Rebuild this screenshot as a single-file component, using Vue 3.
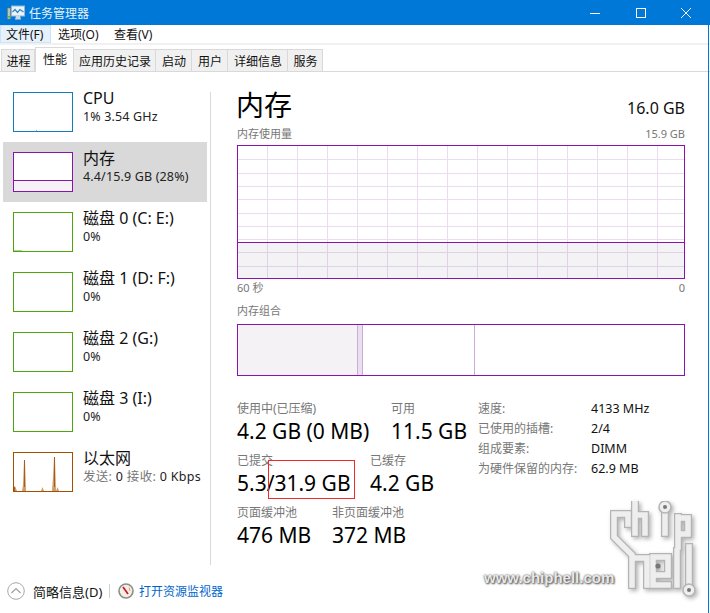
<script setup>
const menus = ['文件(F)', '选项(O)', '查看(V)']
const tabs = [
  { t: '进程', w: 34 }, { t: '性能', w: 39, active: true }, { t: '应用历史记录', w: 82 },
  { t: '启动', w: 36 }, { t: '用户', w: 36 }, { t: '详细信息', w: 60 }, { t: '服务', w: 35 },
]
const devices = [
  { name: 'CPU', sub: '1% 3.54 GHz', kind: 'cpu' },
  { name: '内存', sub: '4.4/15.9 GB (28%)', kind: 'mem', selected: true },
  { name: '磁盘 0 (C: E:)', sub: '0%', kind: 'disk first' },
  { name: '磁盘 1 (D: F:)', sub: '0%', kind: 'disk' },
  { name: '磁盘 2 (G:)', sub: '0%', kind: 'disk' },
  { name: '磁盘 3 (I:)', sub: '0%', kind: 'disk' },
]
const specs = [
  ['速度:', '4133 MHz'],
  ['已使用的插槽:', '2/4'],
  ['组成要素:', 'DIMM'],
  ['为硬件保留的内存:', '62.9 MB'],
]
</script>

<template>
  <div class="window">
    <header class="titlebar">
      <svg class="appicon" width="18" height="16" viewBox="0 0 18 16">
        <rect x="0.5" y="3" width="3" height="11" fill="#b9c4b8" stroke="#6f7f70" stroke-width="0.6" />
        <rect x="1" y="11" width="2" height="1.5" fill="#5cb04a" />
        <rect x="4.5" y="1" width="13" height="10" fill="#eaf3fa" stroke="#9ab4c8" />
        <path d="M5.5 7 L8 4.5 L10.5 7.5 L13 4.5 L16.5 7" fill="none" stroke="#2f86c9" stroke-width="1.2" />
        <path d="M8 14.5 H14 L13 11 H9 Z" fill="#cfd8de" />
      </svg>
      <span class="title">任务管理器</span>
      <div class="winbtns">
        <svg width="12" height="12" viewBox="0 0 12 12"><path d="M1 6.5 H11" stroke="#fff" stroke-width="1" /></svg>
        <svg width="12" height="12" viewBox="0 0 12 12"><rect x="1.5" y="1.5" width="9" height="9" fill="none" stroke="#fff" /></svg>
        <svg width="12" height="12" viewBox="0 0 12 12"><path d="M1 1 L11 11 M11 1 L1 11" stroke="#fff" stroke-width="1" /></svg>
      </div>
    </header>

    <nav class="menubar">
      <span v-for="(m, i) in menus" :key="m" class="menu" :class="{ hot: i === 0 }">{{ m }}</span>
    </nav>

    <div class="tabs">
      <span
        v-for="tab in tabs"
        :key="tab.t"
        class="tab"
        :class="{ active: tab.active }"
        :style="{ width: tab.w + 'px' }"
      >{{ tab.t }}</span>
    </div>

    <div class="body">
      <aside class="sidebar">
        <div v-for="d in devices" :key="d.name" class="device" :class="{ selected: d.selected }">
          <div class="thumb" :class="d.kind">
            <div v-if="d.kind === 'mem'" class="thumb-fill"></div>
          </div>
          <div class="device-text">
            <div class="device-name">{{ d.name }}</div>
            <div class="device-sub">{{ d.sub }}</div>
          </div>
        </div>
        <div class="device">
          <div class="thumb net">
            <svg width="58" height="38" viewBox="0 0 58 38" preserveAspectRatio="none">
              <path d="M0 38 V34 L1 33 L3 38 H8 L9 32 L10 7 L11 7 L12 38 H27 L28.5 34 L30 38 H38 L39 24 L40 4 L41 4 L42 38 L43.5 34 L45 38 Z" fill="#cf9c6e" />
              <path d="M10.5 7 V34 M40.5 4 V34 M0.5 34 V38" fill="none" stroke="#a95c14" stroke-width="1" />
            </svg>
          </div>
          <div class="device-text">
            <div class="device-name">以太网</div>
            <div class="device-sub net-sub"><span class="muted">发送:</span> 0 <span class="muted">接收:</span> 0 Kbps</div>
          </div>
        </div>
      </aside>
      <div class="divider"></div>

      <main class="main">
        <div class="head">
          <h1 class="h1">内存</h1>
          <span class="capacity">16.0 GB</span>
        </div>
        <div class="caption-row caption-top">
          <span>内存使用量</span><span>15.9 GB</span>
        </div>
        <div class="chart">
          <div class="chart-fill"></div>
        </div>
        <div class="caption-row axis">
          <span>60 秒</span><span>0</span>
        </div>
        <div class="caption-row compose-label"><span>内存组合</span></div>
        <div class="compose">
          <div class="seg seg-used"></div>
          <div class="seg seg-mod"></div>
          <div class="seg seg-standby"></div>
          <div class="seg seg-free"></div>
        </div>

        <div class="stats">
          <div class="stat-col">
            <div class="stat-row">
              <div class="stat stat-a"><label>使用中(已压缩)</label><b>4.2 GB (0 MB)</b></div>
              <div class="stat"><label>可用</label><b>11.5 GB</b></div>
            </div>
            <div class="stat-row">
              <div class="stat stat-b"><label>已提交</label><b>5.3/31.9 GB</b></div>
              <div class="stat"><label>已缓存</label><b>4.2 GB</b></div>
            </div>
            <div class="stat-row">
              <div class="stat stat-c"><label>页面缓冲池</label><b>476 MB</b></div>
              <div class="stat"><label>非页面缓冲池</label><b>372 MB</b></div>
            </div>
            <div class="redbox"></div>
          </div>
          <dl class="specs">
            <template v-for="s in specs" :key="s[0]">
              <dt>{{ s[0] }}</dt>
              <dd>{{ s[1] }}</dd>
            </template>
          </dl>
        </div>
      </main>
    </div>

    <footer class="footer">
      <svg width="18" height="18" viewBox="0 0 18 18">
        <circle cx="9" cy="9" r="8.3" fill="#fff" stroke="#a8a8a8" />
        <path d="M4.5 11 L9 6.5 L13.5 11" fill="none" stroke="#a0a0a0" stroke-width="1.2" />
      </svg>
      <span class="brief">简略信息(D)</span>
      <span class="sep"></span>
      <svg width="16" height="16" viewBox="0 0 16 16">
        <circle cx="8" cy="8" r="7" fill="#f3efe8" stroke="#8d8d85" stroke-width="1.6" />
        <path d="M5 4 L10 11" stroke="#c8202a" stroke-width="1.8" />
        <path d="M11 4.5 L12 8" stroke="#e0a070" stroke-width="1" />
      </svg>
      <span class="link">打开资源监视器</span>
    </footer>

    <div class="watermark">
      <svg class="logo" width="92" height="100" viewBox="0 0 92 100">
        <g fill="none" stroke-linejoin="miter" stroke-linecap="square">
          <g stroke="#b4b4b4" stroke-width="8">
            <path d="M21 23 V13 H7 V36 L25 54 V84 M25 57 H40 V84" />
            <path d="M28 1 V32 M28 14 H38 V32" />
            <path d="M58 10 V32" />
            <path d="M71 17 H81 V33 H71 M71 16 V46" />
            <path d="M46 56 H61 V74 H46 M46 56 V84 H61" />
            <path d="M70 50 V84" />
            <path d="M82 46 V86" />
          </g>
          <g stroke="#eeeeee" stroke-width="5.5">
            <path d="M21 23 V13 H7 V36 L25 54 V84 M25 57 H40 V84" />
            <path d="M28 1 V32 M28 14 H38 V32" />
            <path d="M58 10 V32" />
            <path d="M71 17 H81 V33 H71 M71 16 V46" />
            <path d="M46 56 H61 V74 H46 M46 56 V84 H61" />
            <path d="M70 50 V84" />
            <path d="M82 46 V86" />
          </g>
        </g>
        <circle cx="58" cy="6" r="6" fill="#eeeeee" stroke="#b4b4b4" stroke-width="1.5" />
        <circle cx="58" cy="6" r="2" fill="#777" />
        <circle cx="82" cy="89" r="6" fill="#eeeeee" stroke="#b4b4b4" stroke-width="1.5" />
        <circle cx="82" cy="89" r="2" fill="#777" />
        <circle cx="51" cy="65" r="2.6" fill="#777" />
      </svg>
      <span class="wm-text">www.chiphell.com</span>
    </div>
  </div>
</template>

<style>
html, body { margin: 0; background: #fff; overflow: hidden; }
</style>

<style scoped>
.window {
  position: relative;
  box-sizing: border-box;
  width: 710px;
  height: 613px;
  background: #fff;
  color: #000;
  overflow: hidden;
  display: flex;
  flex-direction: column;
  font-family: "Noto Sans", "Noto Sans CJK SC", sans-serif;
  font-size: 12px;
}
.window::after {
  content: "";
  position: absolute;
  right: 1px;
  top: 25px;
  bottom: 0;
  width: 1px;
  background: #0078d7;
}

.titlebar {
  height: 25px;
  flex: none;
  background: #0078d7;
  color: #fff;
  display: flex;
  align-items: center;
  padding-left: 7px;
}
.appicon { flex: none; }
.title { margin-left: 4px; font-size: 12px; color: #e6f1fa; }
.winbtns {
  margin-left: auto;
  width: 103px;
  padding-right: 18px;
  display: flex;
  justify-content: space-between;
  align-items: center;
}
.winbtns svg { display: block; }

.menubar {
  height: 20px;
  box-sizing: border-box;
  flex: none;
  display: flex;
  border-bottom: 2px solid #f1f1f1;
}
.menu {
  padding: 1px 0 0 7px;
  line-height: 17px;
  box-sizing: border-box;
  width: 56px;
  color: #111;
  white-space: nowrap;
}
.menu.hot {
  width: 51px;
  background: #e5f1fb;
  border: 1px solid #cde4f7;
  padding: 0 0 0 5px;
}

.tabs {
  flex: none;
  height: 26px;
  margin-top: 1px;
  display: flex;
  align-items: flex-end;
  padding-left: 1px;
  border-bottom: 1px solid #d9d9d9;
  box-sizing: border-box;
}
.tab {
  box-sizing: border-box;
  height: 22px;
  display: flex;
  align-items: center;
  justify-content: center;
  background: #f0f0f0;
  border: 1px solid #d9d9d9;
  border-bottom: 0;
  border-left-width: 0;
  padding-left: 1px;
  color: #111;
}
.tab:first-child { border-left-width: 1px; }
.tab.active {
  height: 25px;
  background: #fff;
  border-left-width: 1px;
  margin-bottom: -1px;
  padding-bottom: 3px;
}

.body {
  flex: 1;
  display: flex;
  min-height: 0;
}

.sidebar {
  width: 210px;
  flex: none;
  box-sizing: border-box;
  padding: 10px 3px 0;
  display: flex;
  flex-direction: column;
}
.divider {
  flex: none;
  width: 1px;
  height: 473px;
  margin-top: 20px;
  background: #d9d9d9;
}
.device {
  height: 60px;
  flex: none;
  display: flex;
  gap: 10px;
  padding: 10px 0 0 10px;
  box-sizing: border-box;
  align-items: flex-start;
}
.device.selected { background: #d9d9d9; }
.thumb {
  box-sizing: border-box;
  width: 60px;
  height: 40px;
  background: #fff;
  border: 1px solid #117dbb;
  flex: none;
  position: relative;
  overflow: hidden;
}
.thumb.cpu::after {
  content: "";
  position: absolute;
  left: 22px;
  bottom: 0;
  width: 1px;
  height: 1px;
  background: #7fb8da;
}
.thumb.mem { border-color: #8b12ae; display: flex; flex-direction: column; justify-content: flex-end; }
.thumb-fill { height: 10px; background: #f4f2f4; border-top: 1px solid #8b12ae; }
.thumb.disk { border-color: #4da60c; }
.thumb.first::after {
  content: "";
  position: absolute;
  left: 0;
  bottom: 0;
  width: 8px;
  height: 1px;
  background: #a9d488;
}
.thumb.net { border-color: #a74f01; }
.thumb.net svg { display: block; }
.device-name { font-size: 16px; line-height: 18px; margin-top: -3px; color: #111; white-space: nowrap; }
.device-sub { font-size: 12.5px; line-height: 17px; margin-top: 1px; color: #222; white-space: nowrap; letter-spacing: 0.15px; }
.net-sub { letter-spacing: 0.3px; }
.muted { color: #777; }

.main {
  flex: 1;
  min-width: 0;
  padding: 14px 25px 0 26px;
}
.head { display: flex; justify-content: space-between; align-items: flex-end; height: 37px; }
.h1 { margin: 0 0 0 -1px; font-weight: 400; font-size: 28px; line-height: 36px; }
.capacity { font-size: 16px; line-height: 22px; margin-bottom: 4px; color: #111; }

.caption-row {
  display: flex;
  justify-content: space-between;
  font-size: 11px;
  line-height: 16px;
  color: #777;
}
.caption-top { margin-top: 3px; margin-bottom: 3px; }
.chart {
  position: relative;
  box-sizing: border-box;
  height: 134px;
  border: 1px solid #8b12ae;
  background-color: #fff;
  background-image:
    repeating-linear-gradient(to right, transparent 0 29px, #ecdcf1 29px 30px),
    repeating-linear-gradient(to bottom, transparent 0 12.3px, #ecdcf1 12.3px 13.3px);
  background-position: 0 0, 0 1px;
}
.chart-fill {
  position: absolute;
  left: 0;
  right: 0;
  bottom: 0;
  height: 36px;
  box-sizing: border-box;
  border-top: 1px solid #8b12ae;
  background: rgba(100, 90, 110, 0.08);
}
.axis { margin-top: 1px; }
.compose-label { margin-top: 7px; margin-bottom: 5px; }
.compose {
  box-sizing: border-box;
  height: 52px;
  border: 1px solid #8b12ae;
  display: flex;
}
.seg { box-sizing: border-box; height: 100%; }
.seg-used { width: 120px; background: #f4f2f4; border-right: 1px solid #c9aed6; }
.seg-mod { width: 5px; background: #eadff0; border-right: 1px solid #c9aed6; }
.seg-standby { width: 112px; border-right: 1px solid #c9aed6; }
.seg-free { flex: 1; }

.stats {
  display: flex;
  margin-top: 24px;
}
.stat-col {
  position: relative;
  width: 241px;
  flex: none;
}
.stat-row { display: flex; height: 52px; }
.stat { display: flex; flex-direction: column; }
.stat label { font-size: 12px; line-height: 16px; margin-top: 1px; color: #777; white-space: nowrap; }
.stat b { font-weight: 400; font-size: 21px; line-height: 28px; color: #000; white-space: nowrap; }
.stat-a { width: 154px; }
.stat-b { width: 133px; }
.stat-c { width: 95px; }
.redbox {
  position: absolute;
  left: 31px;
  top: 60px;
  width: 87px;
  height: 39px;
  box-sizing: border-box;
  border: 1px solid #f02a2a;
}
.specs {
  margin: -1px 0 0;
  display: grid;
  grid-template-columns: 113px auto;
  grid-auto-rows: 20px;
  font-size: 12px;
  align-content: start;
}
.specs dt { color: #777; line-height: 20px; white-space: nowrap; }
.specs dd { margin: 0; font-size: 12.5px; line-height: 20px; color: #111; white-space: nowrap; }

.footer {
  flex: none;
  height: 40px;
  box-sizing: border-box;
  padding: 0 0 4px 7px;
  display: flex;
  align-items: center;
}
.brief { margin-left: 8px; width: 76px; font-size: 13px; color: #111; white-space: nowrap; }
.sep { width: 1px; height: 14px; background: #d0d0d0; margin-right: 8px; }
.link { margin-left: 5px; color: #0066cc; }

.watermark { position: absolute; left: 480px; top: 495px; width: 228px; height: 118px; pointer-events: none; }
.logo { position: absolute; left: 127px; top: 6px; filter: drop-shadow(2px 2px 2px rgba(0,0,0,0.3)); }
.wm-text {
  position: absolute;
  left: 4px;
  top: 74px;
  font-family: "Liberation Sans", sans-serif;
  font-size: 15px;
  font-weight: 700;
  color: #e9e9e9;
  white-space: nowrap;
  text-shadow: 0 0 2px #444, 1px 1px 2px #555;
}
</style>
